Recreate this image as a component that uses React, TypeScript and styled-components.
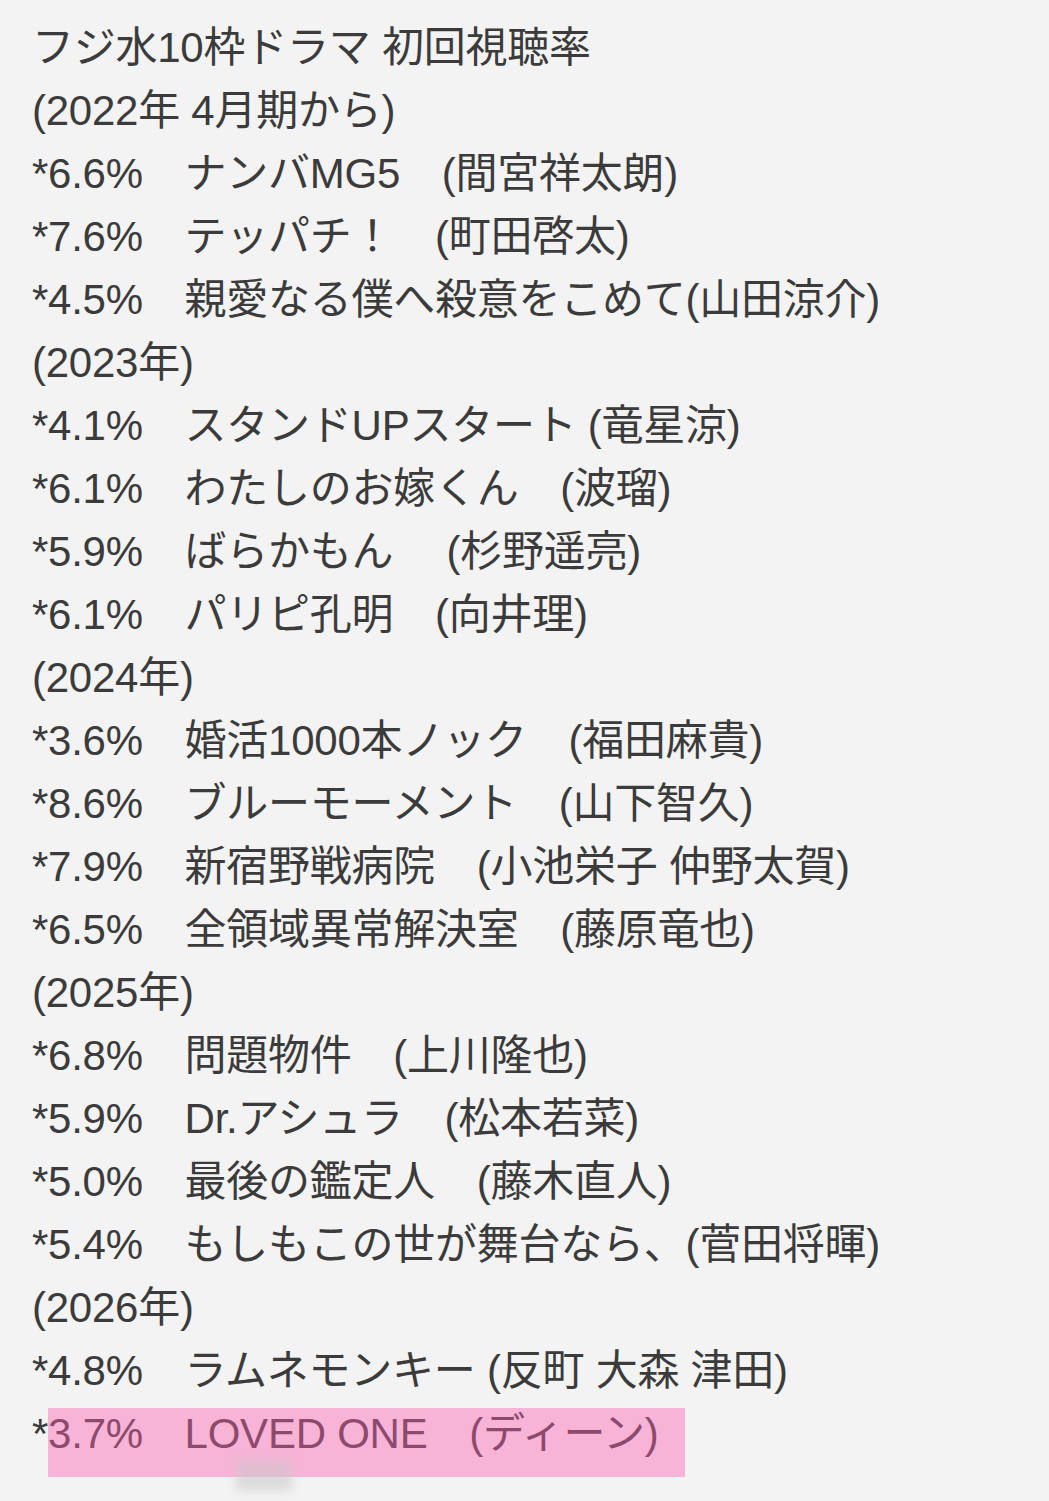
import React from 'react';
import styled, { createGlobalStyle } from 'styled-components';

const GlobalStyle = createGlobalStyle`
  html, body {
    margin: 0;
    padding: 0;
    background: #f3f3f3;
  }
`;

const Page = styled.div`
  position: relative;
  width: 1049px;
  min-height: 1501px;
  box-sizing: border-box;
  padding: 16px 0 0 32px;
  background: #f3f3f3;
  color: #3b3b3b;
  font-family: "Liberation Sans", "Noto Sans CJK JP", sans-serif;
  font-size: 42px;
  line-height: 63px;
  letter-spacing: -0.25px;
  white-space: pre;
`;

const Line = styled.div`
  height: 63px;
`;

const Mark = styled.span`
  position: relative;
  display: inline-block;
  background: #f8b4d7;
  color: #8d4a6d;
  line-height: 51px;
  padding: 0 26px 18px 0;
  vertical-align: baseline;
`;

// faint blurred watermark left on the original screenshot
const Smudge = styled.span`
  position: absolute;
  left: 188px;
  top: 53px;
  width: 56px;
  height: 30px;
  background: rgba(200, 200, 200, 0.55);
  filter: blur(5px);
`;

const lines: string[] = [
  'フジ水10枠ドラマ 初回視聴率',
  '(2022年 4月期から)',
  '*6.6%　ナンバMG5　(間宮祥太朗)',
  '*7.6%　テッパチ！　(町田啓太)',
  '*4.5%　親愛なる僕へ殺意をこめて(山田涼介)',
  '(2023年)',
  '*4.1%　スタンドUPスタート (竜星涼)',
  '*6.1%　わたしのお嫁くん　(波瑠)',
  '*5.9%　ばらかもん　 (杉野遥亮)',
  '*6.1%　パリピ孔明　(向井理)',
  '(2024年)',
  '*3.6%　婚活1000本ノック　(福田麻貴)',
  '*8.6%　ブルーモーメント　(山下智久)',
  '*7.9%　新宿野戦病院　(小池栄子 仲野太賀)',
  '*6.5%　全領域異常解決室　(藤原竜也)',
  '(2025年)',
  '*6.8%　問題物件　(上川隆也)',
  '*5.9%　Dr.アシュラ　(松本若菜)',
  '*5.0%　最後の鑑定人　(藤木直人)',
  '*5.4%　もしもこの世が舞台なら、(菅田将暉)',
  '(2026年)',
  '*4.8%　ラムネモンキー (反町 大森 津田)',
];

export default function App() {
  return (
    <>
      <GlobalStyle />
      <Page>
        {lines.map((text, i) => (
          <Line key={i}>{text}</Line>
        ))}
        <Line>
          *
          <Mark>
            3.7%　LOVED ONE　(ディーン)
            <Smudge />
          </Mark>
        </Line>
      </Page>
    </>
  );
}
